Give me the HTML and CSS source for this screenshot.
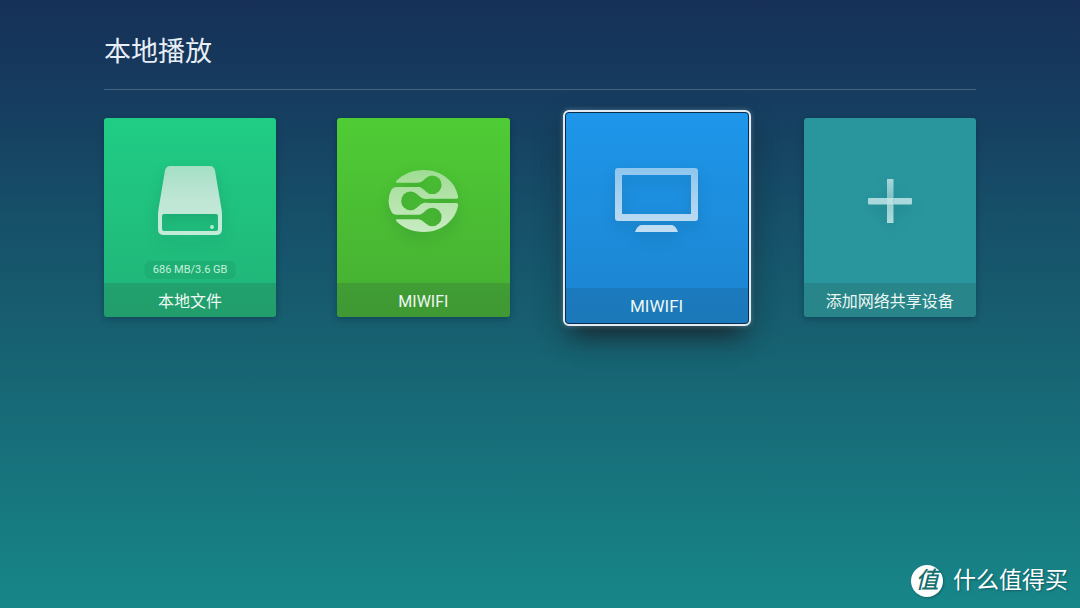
FILE: index.html
```html
<!DOCTYPE html>
<html lang="zh-CN">
<head>
<meta charset="utf-8">
<meta name="viewport" content="width=device-width, initial-scale=1">
<title>本地播放</title>
<link rel="stylesheet" href="styles.css">
</head>
<body>
<main class="screen">
  <header class="header">
    <h1 class="title">本地播放</h1>
  </header>
  <ul class="devices">
    <li>
      <button type="button" class="card card-local">
        <span class="card-art">
          <svg class="icon" width="65" height="69" viewBox="0 0 65 69" aria-hidden="true">
            <defs><linearGradient id="drive" x1="0" y1="0" x2="0" y2="1"><stop offset="0" stop-color="#a4dfc4"/><stop offset=".5" stop-color="#c0e6d6"/><stop offset="1" stop-color="#c2ecda"/></linearGradient></defs>
            <path fill="url(#drive)" fill-rule="evenodd" d="M12 0H52Q56 0 57 4.500L63.500 43Q64 46 64 49V63Q64 69 58 69H6Q0 69 0 63V49Q0 46 .5 43L7 4.500Q8 0 12 0ZM6 48Q4 48 4 50V63Q4 65 6 65H58Q60 65 60 63V50Q60 48 58 48Z"/>
            <circle cx="54" cy="61" r="1.900" fill="#b6ecd3"/>
          </svg>
          <span class="capacity">686 MB/3.6 GB</span>
        </span>
        <span class="card-label">本地文件</span>
      </button>
    </li>
    <li>
      <button type="button" class="card card-router">
        <span class="card-art">
          <svg class="icon" width="72" height="62" viewBox="-1 0 72 62" aria-hidden="true">
            <defs>
              <linearGradient id="router" x1="0" y1="0" x2="0" y2="1"><stop offset="0" stop-color="#a0dc92"/><stop offset="1" stop-color="#c9ebc3"/></linearGradient>
              <mask id="channels" maskUnits="userSpaceOnUse" x="-1" y="0" width="72" height="62">
                <path fill="#fff" d="M9 12.700Q7 12.700 8.500 10.800C15 4 25 0 36 0C53 0 67 11 70 26Q70.500 28.800 68.500 28.800H40V33H68.500Q70.500 33 70 36C67 51 53 62 36 62C25 62 15 58 8.500 51.200Q7 49.200 9 49.200H35V44.800H8Q5 44.800 3.500 42Q-2.500 31 3.500 19.500Q5 16.900 8 16.900H35V12.700Z"/>
                <g fill="#000">
                  <circle cx="44.300" cy="14.800" r="9.300"/>
                  <circle cx="22.500" cy="30.900" r="9.300"/>
                  <circle cx="44.300" cy="47" r="9.300"/>
                  <path d="M0 12.900H29C33 12.900 34.500 11 37 9V20.600C34.500 18.600 33 16.700 29 16.700H0Z"/>
                  <path d="M72 29H38C34 29 32.500 27.100 30 25.100V36.700C32.500 34.700 34 32.800 38 32.800H72Z"/>
                  <path d="M0 45.100H29C33 45.100 34.500 43.200 37 41.200V52.800C34.500 50.800 33 48.900 29 48.900H0Z"/>
                </g>
              </mask>
            </defs>
            <path fill="url(#router)" mask="url(#channels)" d="M-1 0H71V62H-1Z"/>
          </svg>
        </span>
        <span class="card-label">MIWIFI</span>
      </button>
    </li>
    <li>
      <button type="button" class="card card-tv card-focused">
        <span class="card-art">
          <svg class="icon" width="83" height="64" viewBox="0 0 83 64" aria-hidden="true">
            <defs><linearGradient id="tv" x1="0" y1="0" x2="0" y2="1"><stop offset="0" stop-color="#8fc6ee"/><stop offset="1" stop-color="#c3def3"/></linearGradient></defs>
            <path fill="url(#tv)" fill-rule="evenodd" d="M3 0H80Q83 0 83 3V50Q83 53 80 53H3Q0 53 0 50V3Q0 0 3 0ZM7 7V46H76V7ZM26 57H57Q61 58 63 64H20Q22 58 26 57Z"/>
          </svg>
        </span>
        <span class="card-label">MIWIFI</span>
      </button>
    </li>
    <li>
      <button type="button" class="card card-add">
        <span class="card-art">
          <svg class="icon" width="44" height="44" viewBox="0 0 44 44" aria-hidden="true">
            <defs><linearGradient id="plus" x1="0" y1="0" x2="0" y2="1"><stop offset="0" stop-color="#a9d8db"/><stop offset=".4" stop-color="#82c2c6"/><stop offset=".6" stop-color="#9acfd2"/><stop offset="1" stop-color="#aedbdd"/></linearGradient></defs>
            <path fill="url(#plus)" d="M19 0H25.500V44H19Z"/>
            <path fill="#a9d9dc" d="M1 19H19V25.500H1Q0 25.500 0 24.500V20Q0 19 1 19ZM25.500 19H43Q44 19 44 20V24.500Q44 25.500 43 25.500H25.500Z"/>
            <path fill="#bde1e3" d="M19 19H25.500V25.500H19Z"/>
          </svg>
        </span>
        <span class="card-label">添加网络共享设备</span>
      </button>
    </li>
  </ul>
  <footer class="brand">
    <span class="brand-mark">值</span>
    <span class="brand-name">什么值得买</span>
  </footer>
</main>
</body>
</html>
```
FILE: styles.css
```css
* { box-sizing: border-box; }

body {
  margin: 0;
  font-family: Roboto, "Noto Sans CJK SC", sans-serif;
  color: #fff;
}

.screen {
  display: flex;
  flex-direction: column;
  min-height: 100vh;
  padding: 0 104px;
  background: linear-gradient(#163058 0%, #163e60 18%, #165069 36%, #175f70 54%, #17707b 74%, #178789 100%);
}

.header {
  padding: 33px 0 17px;
  border-bottom: 1px solid #45657f;
}

.title {
  margin: 0;
  font-size: 27px;
  font-weight: 400;
  line-height: 39px;
  color: #e8eef5;
}

.devices {
  display: grid;
  grid-template-columns: repeat(4, minmax(0, 1fr));
  gap: 61px;
  margin: 28px 0 0;
  padding: 0;
  list-style: none;
}

.card {
  display: flex;
  flex-direction: column;
  width: 100%;
  padding: 0;
  border: 0;
  border-radius: 3px;
  overflow: hidden;
  font: inherit;
  font-size: 16px;
  color: #edf7f3;
  box-shadow: 0 2px 6px rgba(0, 20, 40, .3);
  cursor: pointer;
}

.card-art {
  position: relative;
  display: flex;
  align-items: center;
  justify-content: center;
  width: 100%;
  height: 165px;
}

.card-label {
  width: 100%;
  padding-top: 3px;
  line-height: 31px;
  text-align: center;
  white-space: nowrap;
  background: rgba(40, 70, 60, .2);
}

.icon { filter: drop-shadow(0 6px 7px rgba(0, 50, 50, .15)); }

.capacity {
  position: absolute;
  bottom: 4px;
  left: 50%;
  transform: translateX(-50%);
  padding: 0 8px;
  border-radius: 6px;
  font-size: 11px;
  line-height: 18px;
  white-space: nowrap;
  color: #c5f0dc;
  background: rgba(20, 100, 70, .13);
}

.card-local { background: linear-gradient(#20cd85, #20b478); }
.card-router { background: linear-gradient(#4fcc35, #46ae32); }
.card-tv { background: linear-gradient(#1e96ea, #1c84cf); }
.card-add { background: #29969e; }

.card-focused {
  width: calc(100% + 12px);
  margin: -6px;
  border-radius: 4px;
  font-size: 17px;
  outline: 2px solid #e3ebf2;
  box-shadow: inset 0 0 0 1px #082c50, 0 0 5px 2px rgba(200, 220, 240, .35), 0 18px 22px -8px rgba(25, 35, 42, .8), 0 12px 30px rgba(25, 40, 48, .4);
}

.card-focused .card-art { height: 176px; }
.card-focused .card-label {
  padding-top: 1px;
  line-height: 35px;
  background: rgba(25, 90, 130, .27);
  box-shadow: inset 1px -1px #082c50, inset -1px 0 #082c50;
}

.brand {
  display: flex;
  align-items: center;
  justify-content: flex-end;
  gap: 10px;
  margin: auto -92px 0 0;
  padding-bottom: 10px;
  text-shadow: 1px 1px 2px rgba(0, 50, 60, .5);
}

.brand-mark {
  width: 32px;
  height: 32px;
  border-radius: 50%;
  font-size: 23px;
  font-style: italic;
  font-weight: 500;
  line-height: 32px;
  text-align: center;
  text-shadow: none;
  color: #15706f;
  background: #fff;
  box-shadow: 1px 1px 2px rgba(0, 50, 60, .4);
}

.brand-name {
  font-size: 23px;
  line-height: 34px;
}
```
